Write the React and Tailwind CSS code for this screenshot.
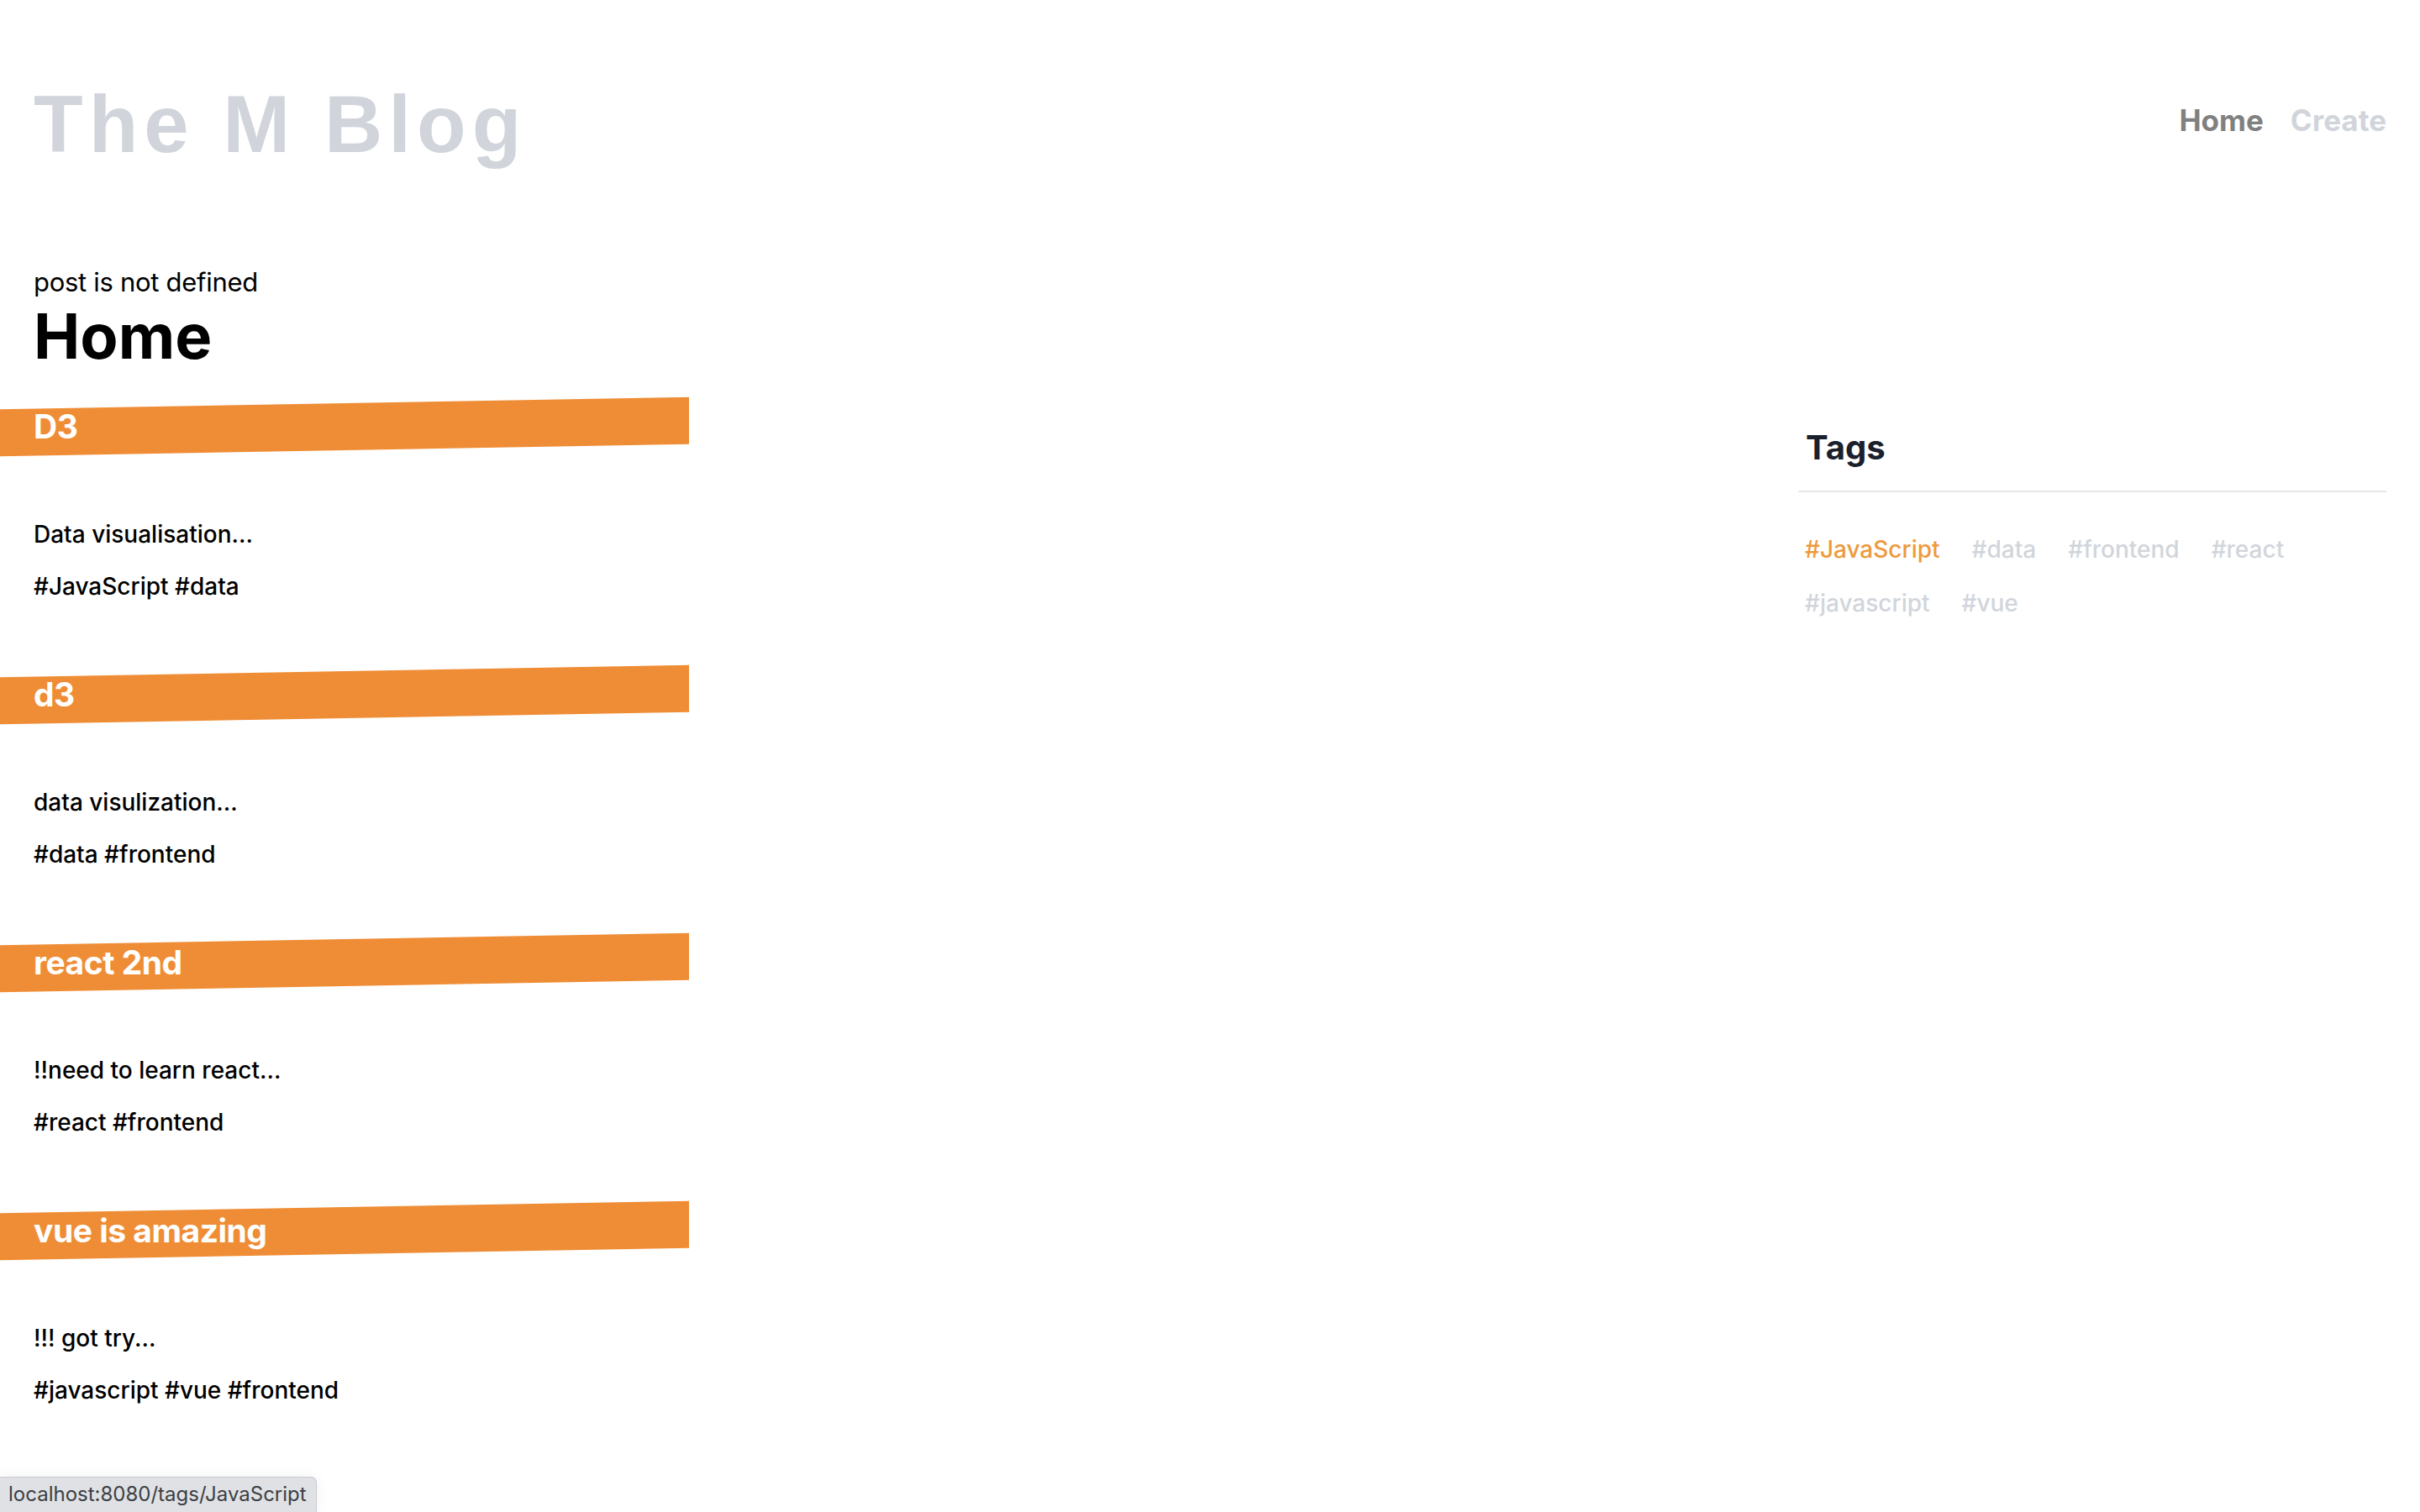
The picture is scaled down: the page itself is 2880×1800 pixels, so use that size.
import React from "react";

const posts = [
  { title: "D3", excerpt: "Data visualisation...", tags: "#JavaScript #data" },
  { title: "d3", excerpt: "data visulization...", tags: "#data #frontend" },
  { title: "react 2nd", excerpt: "!!need to learn react...", tags: "#react #frontend" },
  { title: "vue is amazing", excerpt: "!!! got try...", tags: "#javascript #vue #frontend" },
];

const sideTags = ["#JavaScript", "#data", "#frontend", "#react", "#javascript", "#vue"];

export default function App() {
  return (
    <div className="relative w-[2880px] h-[1800px] overflow-hidden bg-white font-['Inter',_'Noto_Sans',_sans-serif] text-black">
      <header className="flex items-center justify-between pl-[40px] pr-[40px] pt-[100px]">
        <h1 className="font-['Liberation_Sans',_Arial,_sans-serif] font-bold text-[96px] leading-[96px] tracking-[7px] text-[#d1d5db]">
          The M Blog
        </h1>
        <nav className="flex items-center gap-[32px] text-[35px] leading-[48px] font-bold -mt-[10px]">
          <a className="text-[#808080]">Home</a>
          <a className="text-[#d1d5db]">Create</a>
        </nav>
      </header>

      <main className="flex justify-between">
        <section className="w-[820px]">
          <p className="mt-[116px] pl-[40px] text-[31px] leading-[48px] tracking-[-0.3px]">post is not defined</p>
          <h2 className="pl-[40px] text-[74px] leading-[80px] font-bold">Home</h2>
          <div className="mt-[40px]">
            {posts.map((p) => (
              <article key={p.title} className="pb-[81px]">
                <h3 className="-skew-y-1 bg-[#ef8d36] h-[56px] pl-[40px] text-[39px] leading-[56px] font-bold tracking-[-0.5px] text-white">
                  <span className="block skew-y-1">{p.title}</span>
                </h3>
                <p className="mt-[80px] pl-[40px] text-[28px] leading-[40px] font-medium">{p.excerpt}</p>
                <p className="mt-[22px] pl-[40px] text-[28px] leading-[40px] font-medium">{p.tags}</p>
              </article>
            ))}
          </div>
        </section>

        <aside className="w-[700px] mr-[40px] mt-[309px]">
          <h3 className="pl-[9px] pb-[23px] text-[40px] leading-[56px] font-bold text-[#1a202c] border-b-2 border-[#e5e7eb]">
            Tags
          </h3>
          <div className="mt-[48px] pl-[8px] flex flex-wrap gap-x-[38px] gap-y-[24px] text-[28px] leading-[40px] font-medium">
            {sideTags.map((t, i) => (
              <a key={t} className={i === 0 ? "text-[#ee9a3c]" : "text-[#d1d5db]"}>
                {t}
              </a>
            ))}
          </div>
        </aside>
      </main>

      <div className="absolute left-0 bottom-0 h-[42px] w-[377px] bg-[#dfe1e5] border-t border-r border-[#c9cbce] rounded-tr-[7px] pl-[10px] text-[24px] leading-[40px] text-[#3c4043] shadow-[0_0_16px_rgba(0,0,0,0.06)]">
        localhost:8080/tags/JavaScript
      </div>
    </div>
  );
}
